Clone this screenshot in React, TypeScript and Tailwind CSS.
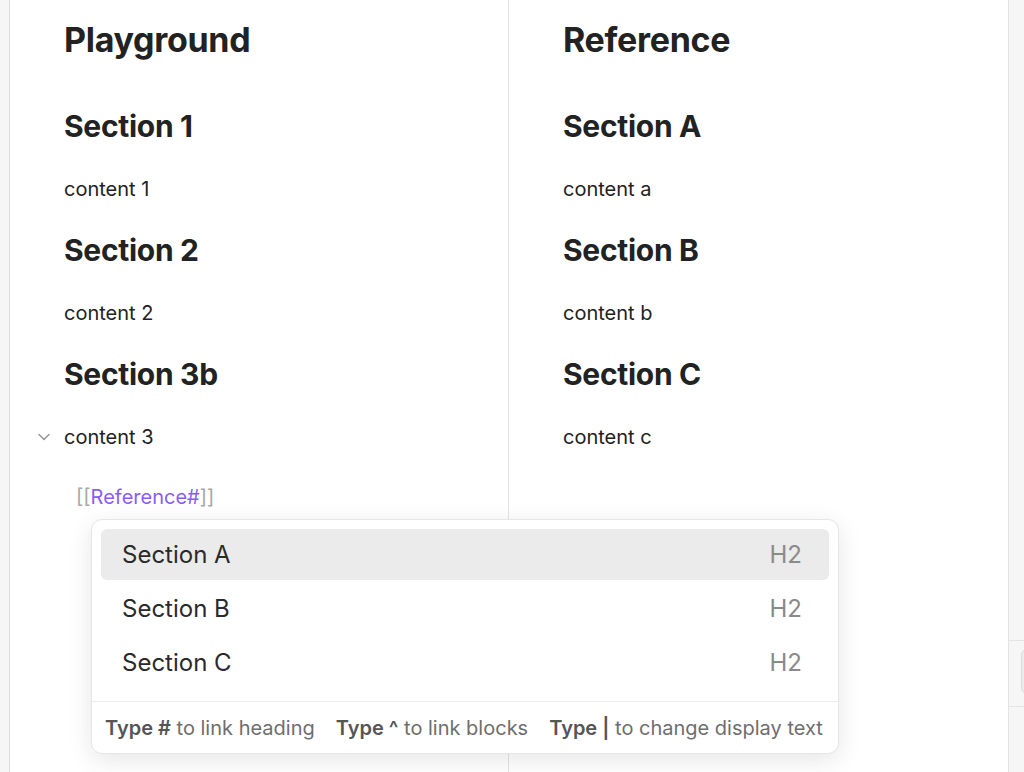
import React from 'react'

const font = { fontFamily: 'Inter, "Noto Sans", sans-serif' }

type Sec = { title: string; body: string; fold?: boolean }

function Pane({ title, sections, children }: { title: string; sections: Sec[]; children?: React.ReactNode }) {
  return (
    <div className="relative flex-1 h-full bg-white pl-[54px] pt-[20px] text-[#222]">
      <h1 className="text-[34px] leading-[40px] font-bold tracking-[-0.3px]">{title}</h1>
      <div className="mt-[48px]">
        {sections.map((s, i) => (
          <div key={s.title} className={i > 0 ? 'mt-[31px]' : ''}>
            <h2 className="text-[30px] leading-[36px] font-bold tracking-[-0.3px]">{s.title}</h2>
            <div className="relative mt-[33px] text-[20px] leading-[24px]">
              {s.fold && (
                <svg
                  className="absolute left-[-27px] top-[7px]"
                  width="14"
                  height="10"
                  viewBox="0 0 14 10"
                  fill="none"
                  stroke="#9a9a9a"
                  strokeWidth="1.6"
                  strokeLinecap="round"
                  strokeLinejoin="round"
                >
                  <path d="M2 2.5 L7 7.5 L12 2.5" />
                </svg>
              )}
              {s.body}
            </div>
          </div>
        ))}
      </div>
      {children}
    </div>
  )
}

const items = ['Section A', 'Section B', 'Section C']

export default function App() {
  return (
    <div className="relative flex w-[1024px] h-[772px] overflow-hidden bg-white" style={font}>
      <div className="shrink-0 w-[10px] h-full bg-[#f6f6f6] border-r border-[#dedede]" />
      <div className="shrink-0 w-[499px] h-full border-r border-[#e3e3e3] flex">
        <Pane
          title="Playground"
          sections={[
            { title: 'Section 1', body: 'content 1' },
            { title: 'Section 2', body: 'content 2' },
            { title: 'Section 3b', body: 'content 3', fold: true },
          ]}
        >
          <div className="mt-[36px] pl-[12px] text-[20px] leading-[24px]">
            <span className="text-[#a8a8a8]">[[</span>
            <span className="text-[#8a5cf0]">Reference#</span>
            <span className="text-[#a8a8a8]">]]</span>
          </div>
        </Pane>
      </div>
      <div className="shrink-0 w-[500px] h-full border-r border-[#e3e3e3] flex">
        <Pane
          title="Reference"
          sections={[
            { title: 'Section A', body: 'content a' },
            { title: 'Section B', body: 'content b' },
            { title: 'Section C', body: 'content c' },
          ]}
        />
      </div>
      <div className="flex-1 min-w-0 overflow-hidden h-full bg-[#f6f6f6] flex flex-col">
        <div className="h-[640px]" />
        <div className="h-[67px] border-t border-b border-[#e4e4e4] pt-[8px] pl-[12px]">
          <div className="w-[20px] h-[45px] rounded-[6px] bg-[#ececec] border border-[#dcdcdc]" />
        </div>
      </div>

      <div className="absolute left-[91px] top-[519px] w-[748px] h-[235px] rounded-[11px] bg-white border border-[#e6e6e6] shadow-[0_6px_24px_rgba(0,0,0,0.10)] flex flex-col">
        <div className="flex flex-col gap-[3px] px-[9px] pt-[9px] h-[181px]">
          {items.map((it, i) => (
            <div
              key={it}
              className={`flex items-center justify-between h-[51px] pl-[21px] pr-[27px] rounded-[6px] text-[24px] ${
                i === 0 ? 'bg-[#ebebeb]' : ''
              }`}
            >
              <span className="text-[#2a2a2a]">{it}</span>
              <span className="text-[#8a8a8a]">H2</span>
            </div>
          ))}
        </div>
        <div className="flex-1 border-t border-[#ececec] flex items-center gap-[21px] px-[13px] text-[20px] text-[#6e6e6e]">
          <span>
            <b className="font-semibold text-[#555]">Type #</b> to link heading
          </span>
          <span>
            <b className="font-semibold text-[#555]">Type ^</b> to link blocks
          </span>
          <span>
            <b className="font-semibold text-[#555]">Type |</b> to change display text
          </span>
        </div>
      </div>
    </div>
  )
}
